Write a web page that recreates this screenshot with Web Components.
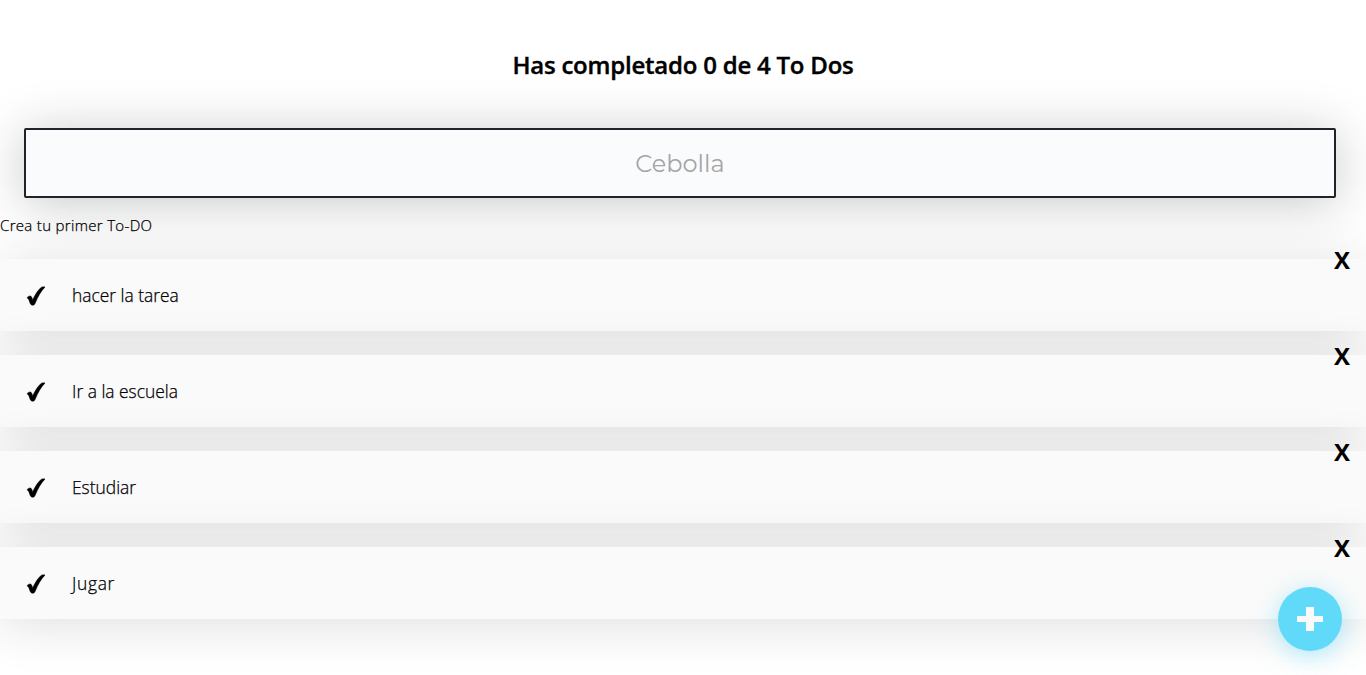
<!DOCTYPE html>
<html lang="es">
<head>
<meta charset="utf-8">
<title>To Dos</title>
<style>
html, body { margin: 0; background: #fff; }
body { font-family: "Open Sans", "Noto Sans", sans-serif; color: #000; min-height: 675px; }
</style>
</head>
<body>
<todo-app></todo-app>
<script>
const define = (name, html, setup) => customElements.define(name, class extends HTMLElement {
  constructor() {
    super();
    this.attachShadow({ mode: 'open' }).innerHTML = html;
  }
  connectedCallback() { if (setup) setup(this, this.shadowRoot); }
});

define('todo-counter', `
<style>
:host { display: block; }
h2 { margin: 0; padding: 49px 48px 47px; font-size: 24px; line-height: 32px; height: 32px; font-weight: 600; text-align: center; }
h2 span { display: inline-block; letter-spacing: -.22px; -webkit-text-stroke: .4px #000; white-space: nowrap; }
</style>
<h2><span><slot></slot></span></h2>`);

define('todo-search', `
<style>
:host { display: block; height: 70px; }
input { box-sizing: border-box; display: block; width: calc(100% - 54px); height: 70px; margin: 0 24px; padding: 0 2px;
  border: 2px solid #202329; border-radius: 2px; background: #fafbfd; box-shadow: 0 5px 50px rgba(32,35,41,.25);
  font: 400 24px Montserrat, Inter, sans-serif; text-align: center; color: #1e1e1f; outline: none; }
input::placeholder { color: #a5a5a5; opacity: 1; }
</style>
<input>`, (el, root) => { root.querySelector('input').placeholder = el.getAttribute('placeholder'); });

define('todo-message', `
<style>
:host { display: block; }
p { margin: 16px 0 0; height: 21px; line-height: 23px; font-size: 15px; font-weight: 300; letter-spacing: .32px; white-space: nowrap; -webkit-text-stroke: .25px #000; }
</style>
<p><slot></slot></p>`);

define('todo-item', `
<style>
:host { display: flex; position: relative; justify-content: center; align-items: center; height: 72px; margin-top: 24px;
  background: #fafafa; box-shadow: 0 5px 50px rgba(32,35,41,.15); }
.check, .delete { position: absolute; display: flex; align-items: center; justify-content: center; width: 48px; height: 48px; }
.check { left: 12px; top: 13px; }
.delete { top: -24px; right: 0; font-size: 24px; font-weight: 700; letter-spacing: 0; }
p { margin: 0 0 0 24px; width: calc(100% - 120px); font-size: 17.4px; line-height: 24px; font-weight: 300; -webkit-text-stroke: .25px #000; }
</style>
<span class="check"><svg width="20" height="20" viewBox="0 0 20 20"><path stroke="#000" stroke-width=".5" d="M1.1 11.7C1.8 10.5 3.6 9.6 4.7 10.1C5.5 10.5 6 12.1 6.7 13.7C9.4 7.9 12.3 3.8 15.1 1.5C16 .8 17.3.7 19 1C14.9 5.3 11.9 10.7 9.2 17.2C8.6 18.6 7.9 19.2 6.6 19.2C5.2 19.2 4.7 18.5 4 17C3.2 14.3 2.6 12.8 1.1 11.7Z"/></svg></span>
<p><slot></slot></p>
<span class="delete">X</span>`);

define('todo-add', `
<style>
:host { display: block; position: fixed; right: 24px; bottom: 24px; z-index: 1; width: 64px; height: 64px; }
button { display: flex; align-items: center; justify-content: center; width: 64px; height: 64px; padding: 0; border: 0; border-radius: 50%;
  background: #61dafa; box-shadow: 0 5px 25px rgba(97,218,250,.5); }
</style>
<button aria-label="Agregar"><svg width="26" height="24" viewBox="0 0 26 24" fill="#fafafa"><path d="M9 0h8v9h9v6h-9v9H9v-9H0V9h9z"/></svg></button>`);

define('todo-app', `
<style>
:host { display: block; }
.wide { letter-spacing: .7px; }
</style>
<todo-counter>Has completado 0 de 4 To Dos</todo-counter>
<todo-search placeholder="Cebolla"></todo-search>
<todo-message>Crea tu primer To-DO</todo-message>
<todo-item>hacer la tarea</todo-item>
<todo-item>Ir a la escuela</todo-item>
<todo-item>Estudiar</todo-item>
<todo-item class="wide">Jugar</todo-item>
<todo-add></todo-add>`);
</script>
</body>
</html>
